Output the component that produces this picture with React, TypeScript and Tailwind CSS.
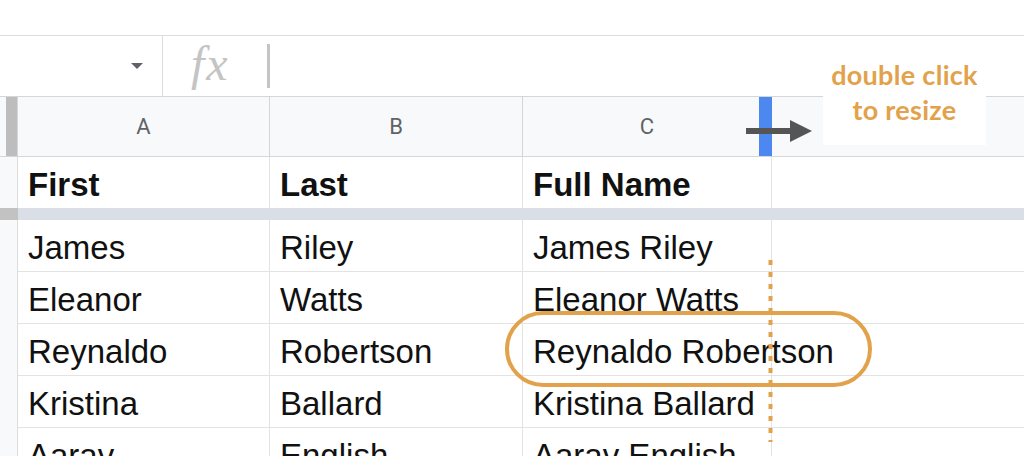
import React from 'react'

const rows = [
  ['James', 'Riley', 'James Riley'],
  ['Eleanor', 'Watts', 'Eleanor Watts'],
  ['Reynaldo', 'Robertson', 'Reynaldo Robertson'],
  ['Kristina', 'Ballard', 'Kristina Ballard'],
  ['Aarav', 'English', 'Aarav English'],
]

const cols = 'grid grid-cols-[18px_252px_253px_249px_1fr]'

function App() {
  return (
    <div className="relative w-[1024px] h-[468px] bg-white overflow-hidden font-['Liberation_Sans',Arial,sans-serif]">
      {/* top strip */}
      <div className="h-[36px] border-b border-[#dadce0]"></div>

      {/* formula bar */}
      <div className="flex h-[60px] items-stretch">
        <div className="w-[162px] flex items-center justify-end pr-[19px]">
          <svg width="12" height="6" viewBox="0 0 12 6">
            <path d="M0 0h12L6 6z" fill="#5f6368" />
          </svg>
        </div>
        <div className="w-px bg-[#dadce0]"></div>
        <div className="w-[104px] pl-[28px] flex items-center">
          <span className="font-['Liberation_Serif',serif] italic text-[48px] leading-none text-[#c4c4c4] tracking-[2px] -mt-[4px]">fx</span>
        </div>
        <div className="my-[8px] w-[3px] bg-[#c4c4c4]"></div>
      </div>

      {/* grid */}
      <div className="h-[360px] overflow-hidden">
        {/* column header */}
        <div className={`${cols} h-[61px] bg-[#f8f9fa] border-y border-[#d4d6d8] font-['Roboto',sans-serif] text-[22px] text-[#5f6368]`}>
          <div className="flex justify-end border-r border-[#d4d6d8]">
            <div className="w-[11px] bg-[#bdbdbd]"></div>
          </div>
          <div className="flex items-center justify-center border-r border-[#d4d6d8]">A</div>
          <div className="flex items-center justify-center border-r border-[#d4d6d8]">B</div>
          <div className="relative flex items-center justify-center border-r border-[#d4d6d8]">
            C
            <div className="absolute right-[-1px] top-0 bottom-0 w-[13px] bg-[#4d88f0]"></div>
          </div>
          <div></div>
        </div>

        {/* header row */}
        <div className={`${cols} h-[51px] text-[33px] font-bold text-[#111]`}>
          <div className="bg-[#f8f9fa] border-r border-[#dadce0]"></div>
          <div className="flex items-center pl-[10px] pt-[3px] border-r border-[#e2e3e3]">First</div>
          <div className="flex items-center pl-[10px] pt-[3px] border-r border-[#e2e3e3]">Last</div>
          <div className="flex items-center pl-[10px] pt-[3px] border-r border-[#e2e3e3]">Full Name</div>
          <div></div>
        </div>

        {/* freeze band */}
        <div className={`${cols} h-[12px]`}>
          <div className="bg-[#c2c2c2]"></div>
          <div className="col-span-4 bg-[#dadee6]"></div>
        </div>

        {rows.map((r) => (
          <div key={r[0]} className={`${cols} h-[52px] text-[33px] text-[#111] border-b border-[#e2e3e3]`}>
            <div className="bg-[#f8f9fa] border-r border-[#dadce0]"></div>
            <div className="flex items-center pl-[10px] pt-[3px] border-r border-[#e2e3e3] whitespace-nowrap">{r[0]}</div>
            <div className="flex items-center pl-[10px] pt-[3px] border-r border-[#e2e3e3] whitespace-nowrap">{r[1]}</div>
            <div className="flex items-center pl-[10px] pt-[3px] border-r border-[#e2e3e3] whitespace-nowrap">{r[2]}</div>
            <div></div>
          </div>
        ))}
      </div>

      {/* annotation: drag arrow */}
      <svg className="absolute left-[746px] top-[119px]" width="67" height="24" viewBox="0 0 67 24">
        <rect x="0" y="9" width="46" height="6" fill="#555" />
        <path d="M44 1L66 12L44 23z" fill="#555" />
      </svg>

      {/* annotation label */}
      <div className="absolute left-[823px] top-[50px] w-[163px] h-[95px] bg-white pt-[7px] text-center font-['Lato',sans-serif] font-bold text-[27px] leading-[35px] tracking-[0.3px] text-[#e2a24c]">
        <div>double click</div>
        <div>to resize</div>
      </div>

      {/* dotted resize guide */}
      <svg className="absolute left-[768px] top-[260px]" width="5" height="182" viewBox="0 0 5 182">
        <line x1="2.5" y1="0" x2="2.5" y2="182" stroke="#e2a24c" strokeWidth="4" strokeDasharray="5 7" />
      </svg>

      {/* highlight oval */}
      <div className="absolute left-[505px] top-[311px] w-[367px] h-[76px] rounded-full border-4 border-[#e2a24c]"></div>
    </div>
  )
}

export default App
